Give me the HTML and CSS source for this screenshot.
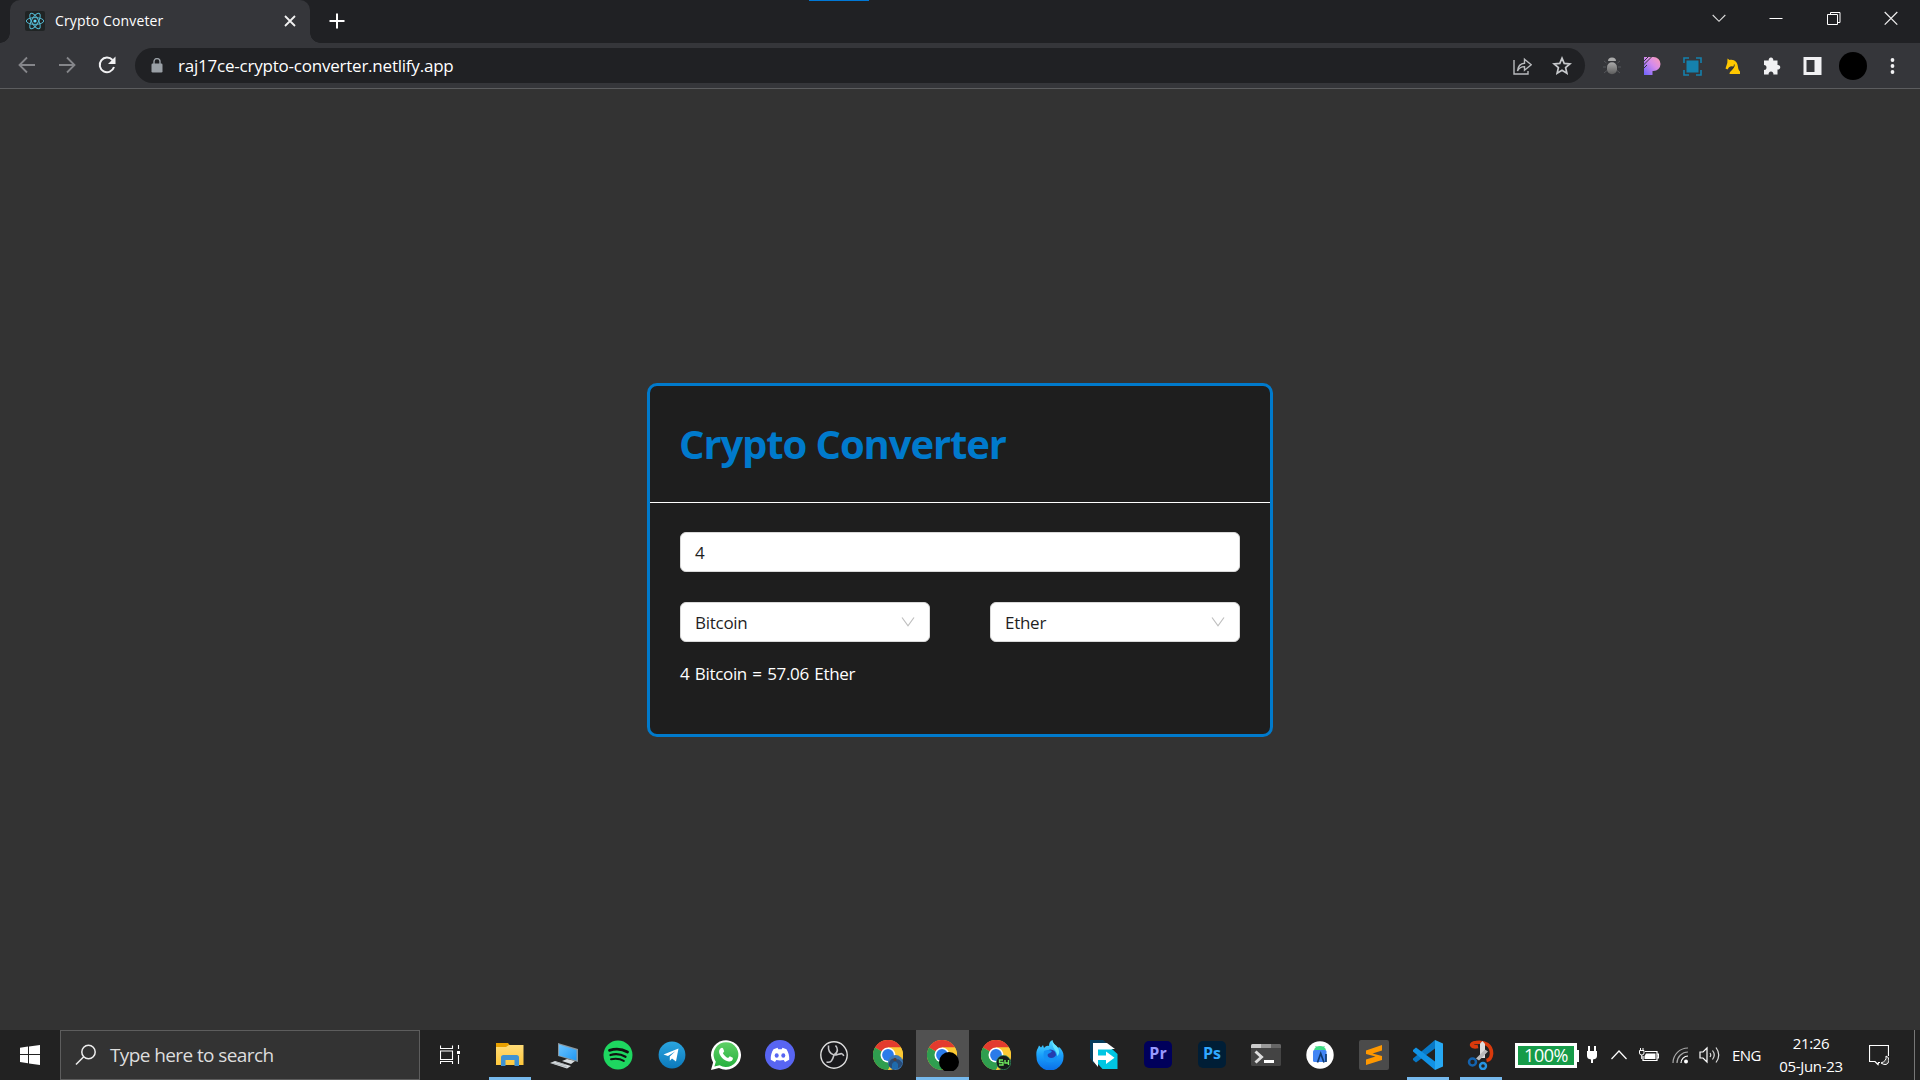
FILE: index.html
```html
<!DOCTYPE html>
<html lang="en">
<head>
<meta charset="utf-8">
<title>Crypto Conveter</title>
<link rel="stylesheet" href="styles.css">
</head>
<body>
<svg width="0" height="0" class="defs" aria-hidden="true">
  <defs>
    <linearGradient id="gBug" x1="0" y1="0" x2="0" y2="1"><stop offset="0" stop-color="#aaa"/><stop offset="1" stop-color="#5c5c5c"/></linearGradient>
    <linearGradient id="gP" x1="1" y1="0" x2="0" y2="1"><stop offset="0" stop-color="#ff9fb4"/><stop offset=".45" stop-color="#d58bea"/><stop offset="1" stop-color="#6b63ff"/></linearGradient>
    <linearGradient id="gFolder" x1="0" y1="0" x2="0" y2="1"><stop offset="0" stop-color="#ffdc78"/><stop offset="1" stop-color="#ffc83c"/></linearGradient>
    <linearGradient id="gTg" x1="0" y1="0" x2="0" y2="1"><stop offset="0" stop-color="#2aa5e0"/><stop offset="1" stop-color="#0c79bb"/></linearGradient>
    <linearGradient id="gWa" x1="0" y1="0" x2="0" y2="1"><stop offset="0" stop-color="#5fd066"/><stop offset="1" stop-color="#27b13e"/></linearGradient>
    <linearGradient id="gFx" x1="0" y1="0" x2="0" y2="1"><stop offset="0" stop-color="#53dcff"/><stop offset=".5" stop-color="#1aa0fb"/><stop offset="1" stop-color="#0a6fe8"/></linearGradient>
    <linearGradient id="gScreen" x1="0" y1="0" x2="1" y2="1"><stop offset="0" stop-color="#6cc4ff"/><stop offset="1" stop-color="#1f97f3"/></linearGradient>
    <symbol id="chrome" viewBox="0 0 30 30">
      <circle cx="15" cy="15" r="15" fill="#fcc934"/>
      <path d="M15 15 2 7.500A15 15 0 0 1 28 7.500H15z" fill="#e33b2e"/>
      <path d="M2 7.500A15 15 0 0 0 15 30L21.500 18.750 15 15z" fill="#2f9e4f"/>
      <path d="M15 7.500h13A15 15 0 0 1 15 30l6.500-11.250z" fill="#fcc934"/>
      <circle cx="15" cy="15" r="7.500" fill="#fff"/><circle cx="15" cy="15" r="5.900" fill="#2a7be9"/>
    </symbol>
  </defs>
</svg>

<header class="tabstrip">
  <div class="tab">
    <svg class="favicon" width="20" height="20" viewBox="0 0 20 20"><rect width="20" height="20" rx="2" fill="#202424"/><g fill="none" stroke="#53b7d0" stroke-width="1"><ellipse cx="10" cy="10" rx="8.700" ry="3.400"/><ellipse cx="10" cy="10" rx="8.700" ry="3.400" transform="rotate(60 10 10)"/><ellipse cx="10" cy="10" rx="8.700" ry="3.400" transform="rotate(120 10 10)"/></g><circle cx="10" cy="10" r="1.600" fill="#61dafb"/></svg>
    <span class="tab-title">Crypto Conveter</span>
    <svg class="tab-close" width="12" height="12" viewBox="0 0 12 12"><path d="M1 1l10 10M11 1L1 11" stroke="#f1f1f1" stroke-width="1.800"/></svg>
  </div>
  <svg class="new-tab" width="16" height="16" viewBox="0 0 16 16"><path d="M8 .5v15M.5 8h15" stroke="#fff" stroke-width="2"/></svg>
  <div class="share-bar"></div>
  <nav class="window-buttons">
    <svg width="14" height="14" viewBox="0 0 14 14"><path d="M.7 4 7 10.300 13.300 4" fill="none" stroke="#ddd" stroke-width="1.100"/></svg>
    <svg width="14" height="14" viewBox="0 0 14 14"><path d="M.5 7.500h13" stroke="#fff"/></svg>
    <svg width="14" height="14" viewBox="0 0 14 14"><path d="M.5 3.500h10v10H.5zM3.500 3.500V1.500h9.500V11.500h-2.500" fill="none" stroke="#fff"/></svg>
    <svg width="14" height="14" viewBox="0 0 14 14"><path d="M.7 1l12.600 12.600M13.300 1L.7 13.600" stroke="#eee" stroke-width="1.200"/></svg>
  </nav>
</header>

<div class="toolbar">
  <div class="nav-buttons">
    <svg width="18" height="18" viewBox="0 0 18 18"><path d="M17 9H2M9 1.500 1.500 9 9 16.500" fill="none" stroke="#85868a" stroke-width="1.800"/></svg>
    <svg width="18" height="18" viewBox="0 0 18 18"><path d="M1 9h15M9 1.500 16.500 9 9 16.500" fill="none" stroke="#85868a" stroke-width="1.800"/></svg>
    <svg width="18" height="18" viewBox="0 0 18 18"><path d="M14.500 4A7.300 7.300 0 1 0 16 11" fill="none" stroke="#f1f1f3" stroke-width="2"/><path d="M17.500.5v7.500H10z" fill="#f1f1f3"/></svg>
  </div>
  <div class="omnibox">
    <svg class="lock" width="12" height="15" viewBox="0 0 12 15"><rect x=".5" y="5.500" width="11" height="9" rx="1.200" fill="#9aa0a6"/><path d="M3 6V3.600a3 3 0 0 1 6 0V6" fill="none" stroke="#9aa0a6" stroke-width="1.400"/></svg>
    <span class="url">raj17ce-crypto-converter.netlify.app</span>
    <div class="omni-actions">
      <svg width="20" height="20" viewBox="0 0 20 20"><path d="M2 4v14h14v-3M5.500 15c.5-5 3-7.500 7-7.700V3.200l6.700 5.500-6.700 5.500v-3.600c-3.500 0-5.500 1.200-7 4.400z" fill="none" stroke="#b9bbbe" stroke-width="1.400"/></svg>
      <svg width="20" height="20" viewBox="0 0 20 20"><path d="m10 2.200 2.200 5.200 5.700.5-4.300 3.700 1.300 5.600-4.900-3-4.900 3 1.300-5.600L2.100 7.900l5.700-.5z" fill="none" stroke="#c7c9cc" stroke-width="1.700"/></svg>
    </div>
  </div>
  <div class="extensions">
    <svg width="20" height="20" viewBox="0 0 20 20"><path d="M2 5l2.500 2M18 5l-2.500 2M1 11h3M19 11h-3M2 17l3-2.500M18 17l-3-2.500" stroke="#55565a"/><path d="M6 5a4 3.500 0 0 1 8 0z" fill="#aaa"/><rect x="5" y="6.300" width="10" height="12" rx="5" fill="url(#gBug)"/></svg>
    <svg width="20" height="20" viewBox="0 0 20 20"><path d="M2 1h9.500a7 7 0 0 1 0 14H10.500v4H2z" fill="url(#gP)"/><path d="M1.500 5.500 6.500.5M1.500 9 10 .5M1.500 12.500 5 9" stroke="#35363a" stroke-width="1"/></svg>
    <svg width="20" height="20" viewBox="0 0 20 20"><rect x="4.500" y="4.500" width="12" height="12" fill="#1581ad"/><path d="M2 7V2h5M14 2h5v5M19 14v5h-5M7 19H2v-5" fill="none" stroke="#1581ad" stroke-width="1.600"/></svg>
    <svg width="20" height="20" viewBox="0 0 20 20"><path d="M5.500 2.500 7.500 4C12.500 3 15.500 6 16 11c.2 2.500 1 3.500 2 4.500V18H7.500c0-3 4-4 4.500-7.500L9 10.200 7 11.200 5.500 13.500 3.500 12.500 5.300 7z" fill="#ffc800"/><path d="M12.300 8.500c.2 2-1 3.500-2.500 4.800" fill="none" stroke="#33302a" stroke-width=".9"/></svg>
    <svg width="20" height="20" viewBox="0 0 20 20"><path d="M2 4.500h4.800a2.300 2.300 0 1 1 4.400 0H15.500V9a2.300 2.300 0 1 1 0 4.500V18.500H11.300a2.400 2.400 0 1 0-4.600 0H2v-4.500A2.500 2.500 0 1 0 2 9z" fill="#f1f1f3"/></svg>
    <svg width="20" height="20" viewBox="0 0 20 20"><path fill-rule="evenodd" d="M1.500 1h18v18h-18zM4.500 4v12h8V4z" fill="#f1f1f3"/></svg>
    <i class="avatar"></i>
    <svg width="20" height="20" viewBox="0 0 20 20"><circle cx="10.500" cy="4" r="1.900" fill="#f1f1f3"/><circle cx="10.500" cy="10" r="1.900" fill="#f1f1f3"/><circle cx="10.500" cy="16" r="1.900" fill="#f1f1f3"/></svg>
  </div>
</div>

<main class="page">
  <section class="card">
    <h1 class="card-title">Crypto Converter</h1>
    <div class="card-body">
      <div class="field"><span>4</span></div>
      <div class="selects">
        <div class="field"><span>Bitcoin</span><svg width="14" height="14" viewBox="0 0 14 14"><path d="M1 2.500 7 10.800 13 2.500" fill="none" stroke="#bfbfbf" stroke-width="1.200"/></svg></div>
        <div class="field"><span>Ether</span><svg width="14" height="14" viewBox="0 0 14 14"><path d="M1 2.500 7 10.800 13 2.500" fill="none" stroke="#bfbfbf" stroke-width="1.200"/></svg></div>
      </div>
      <p class="result">4 Bitcoin = 57.06 Ether</p>
    </div>
  </section>
</main>

<footer class="taskbar">
  <div class="start"><svg width="20" height="20" viewBox="0 0 20 20"><path d="M0 2.800 8 1.600V9H0zM9 1.400 20 0v9H9zM0 10h8v8.200L0 17zM9 10h11v10L9 18.500z" fill="#fff"/></svg></div>
  <div class="search">
    <svg width="22" height="22" viewBox="0 0 22 22"><circle cx="13.500" cy="8" r="6.700" fill="none" stroke="#eee" stroke-width="1.500"/><path d="M8.700 12.700 1 20.500" stroke="#eee" stroke-width="1.500"/></svg>
    <span>Type here to search</span>
  </div>
  <div class="taskview"><svg width="20" height="20" viewBox="0 0 20 20"><path d="M.5.500v3h12v-3M.5 6h12v8.500H.5zM.5 19v-2.500h12V19M18.500 0v4M18.500 10v9" fill="none" stroke="#fff" stroke-width="1.100"/><path d="M17 6h3v3h-3z" fill="#fff"/></svg></div>

  <div class="apps">
    <div class="app running"><svg width="30" height="30" viewBox="0 0 30 30"><path d="M1 3h12l2 2.500H14V9H1z" fill="#e8a000"/><path d="M1 7h10l3-2h14.500v20H1z" fill="url(#gFolder)"/><path d="M6 26V17.500Q6 15 8.500 15h13Q24 15 24 17.500V26h-4.500v-6h-9v6z" fill="#3f93d2"/></svg></div>
    <div class="app"><svg width="30" height="30" viewBox="0 0 30 30"><path d="M9 3 29 9V22L9 16z" fill="#8a979f"/><path d="M10 4.500 27.500 10V20.500L10 15.500z" fill="url(#gScreen)"/><path d="m13 21 5-2 8 2-4 3zM1 23l5-2 16 5-4 2.500z" fill="#d8dde0"/><path d="m3 23 15 4M7 22l10 3" stroke="#9da5a9" stroke-width=".7"/></svg></div>
    <div class="app"><svg width="30" height="30" viewBox="0 0 30 30"><circle cx="15" cy="15" r="14.500" fill="#1ed760"/><g fill="none" stroke="#111" stroke-linecap="round"><path d="M6.500 10.300c6-1.800 13-1.200 18 1.700" stroke-width="2.800"/><path d="M7.500 15c5-1.400 10.500-.8 15 1.700" stroke-width="2.300"/><path d="M8 19.300c4.500-1 9-.6 12.800 1.600" stroke-width="1.900"/></g></svg></div>
    <div class="app"><svg width="30" height="30" viewBox="0 0 30 30"><circle cx="15" cy="15" r="13.400" fill="url(#gTg)"/><path d="m6.500 14.500 15-6-2.500 13-4-3-2.200 2.200v-4.200l5.500-5.200-7.300 4.600z" fill="#fff"/></svg></div>
    <div class="app"><svg width="30" height="30" viewBox="0 0 30 30"><path d="M0 30 2.100 22.500A15 14.700 0 1 1 8 28z" fill="#fff"/><path d="M3.400 26.600 4.800 21.700A12.400 12.400 0 1 1 8.700 25.300z" fill="url(#gWa)"/><path d="M9.700 8.300c1-1 2-.7 2.400.2l1.100 2.700-1.300 2c1.300 2.300 2.800 3.700 5.200 4.800l1.700-1.700 3 1.500c.6 3-2.400 4-4 3.700-5-1-9.300-5.500-9.700-9.600-.1-1.400.6-2.700 1.600-3.600z" fill="#fff"/></svg></div>
    <div class="app"><svg width="30" height="30" viewBox="0 0 30 30"><circle cx="15" cy="15" r="15" fill="#5865f2"/><path d="m8.500 9.200 4-1.500.8 1.500h3.400l.8-1.500 4 1.500c2 3 3 7 2.700 10.600L20 22l-1.300-2q-3.700.8-7.400 0L10 22l-4.200-2.200C5.500 16 6.500 12 8.500 9.200z" fill="#fff"/><ellipse cx="11.700" cy="15.500" rx="2" ry="2.200" fill="#5865f2"/><ellipse cx="18.300" cy="15.500" rx="2" ry="2.200" fill="#5865f2"/></svg></div>
    <div class="app"><svg width="30" height="30" viewBox="0 0 30 30"><circle cx="15" cy="15" r="13.200" fill="#19191c" stroke="#dedede" stroke-width="1.400"/><path d="M9.500 5.500c-.5 5 2 8.500 5.500 9.500 5 0 8.500-3.700 9.700 1M15 15c-1.500 5.500-3 8-7.500 7M15 15c4.500-2.800 4-7 1.500-9.500" fill="none" stroke="#c5c5c8" stroke-width="1.600"/></svg></div>
    <div class="app"><svg width="30" height="30" viewBox="0 0 30 30"><use href="#chrome"/><circle cx="22.500" cy="22.500" r="7.500" fill="#3c78b4"/><path d="M15.500 25c1-5 4-8 7-5 3-2 5 1 7 3a7.500 7.500 0 0 1-14 2z" fill="#284c78"/><circle cx="22" cy="19.500" r="1.700" fill="#513f3c"/><path d="M19 29v-5q3-5 6 0v5z" fill="#1e6aac"/></svg></div>
    <div class="app active"><svg width="32" height="32" viewBox="0 0 32 32"><use href="#chrome" y="1" width="30" height="30"/><circle cx="22" cy="23" r="10" fill="#000"/></svg></div>
    <div class="app"><svg width="30" height="30" viewBox="0 0 30 30"><use href="#chrome"/><circle cx="22.500" cy="22.500" r="7.200" fill="#151c1b" stroke="#35a46d" stroke-width=".6"/><path d="M22 20h-3.500v2.500H22V25h-4M24 20v3h3.500M27.500 20v5" fill="none" stroke="#6ee95d" stroke-width="1.400"/></svg></div>
    <div class="app"><svg width="30" height="30" viewBox="0 0 30 30"><path d="M3 8 4 5.500l2 2 2-2.500 1 3c2-2 3-2.500 5-2 0-3 1-5 3.500-6 0 4 4 5 5.500 8l1-1c3 2.500 5 6 4.500 10a13.500 13.500 0 0 1-27 0C1 13 1.500 10 3 8z" fill="url(#gFx)"/><circle cx="15.500" cy="15" r="5.500" fill="#243cae"/><path d="M9 11c3-1.500 6-1 8 0-1 2-3 2-4 3s0 4 3 4 5-2 5.500-4c1.500 5-2 8.500-6.500 8.500C10 22.500 7.500 18 9 11z" fill="#1591f5"/><path d="M17.500 0c0 4 4 5 5.500 8 2 4 1 7-1 8 1-5-6-7-4.500-16z" fill="#63e5ff"/></svg></div>
    <div class="app"><svg width="30" height="30" viewBox="0 0 30 30"><path d="M1 0h13l4 3.500H5V24l-4-6z" fill="#053d5d"/><path d="M4 3h14l8 6H9v18l-5-6z" fill="#fff"/><path d="M9 9h14l5.500 5v15H13.500L9 24z" fill="#00c6e2"/><path d="M9 7h11l3 2.500H9z" fill="#fff"/><path d="M8.500 15.500H17V11.500l8.500 6.300L17 24v-4H8.500z" fill="#fff"/></svg></div>
    <div class="app"><div class="adobe premiere">Pr</div></div>
    <div class="app"><div class="adobe photoshop">Ps</div></div>
    <div class="app"><svg width="30" height="30" viewBox="0 0 30 30"><rect y="4" width="30" height="22" rx="1.500" fill="#444"/><path d="M0 8V5.500Q0 4 1.500 4H10v4z" fill="#ccc"/><path d="M10 4h10v4H10z" fill="#999"/><path d="M20 4h8.500Q30 4 30 5.500V8H20z" fill="#666"/><path d="m4.500 11.500 6 5.500-6 5.500" fill="none" stroke="#ddd" stroke-width="3"/><path d="M13 20h10v3H13z" fill="#fff"/></svg></div>
    <div class="app"><svg width="30" height="30" viewBox="0 0 30 30"><circle cx="15" cy="15" r="13.700" fill="#fff"/><path d="M9 10.500a6 4.500 0 0 1 12 0z" fill="#3ddc84"/><path d="m10.500 6 2 2M19.500 6l-2 2" stroke="#3ddc84"/><rect x="8" y="10" width="13.500" height="12" rx="1.500" fill="#4285f4"/><path d="m12.500 22.500 3.200-9 3.300 9M21 14v8" fill="none" stroke="#103b70" stroke-width="1.700"/></svg></div>
    <div class="app"><svg width="30" height="30" viewBox="0 0 30 30"><rect width="30" height="30" rx="2" fill="#4b4b4b"/><path d="M7 10.500 23 5v5.500L13.500 13.500 23 16v4L7 25v-5.500L16.500 16.500 7 14z" fill="#ff9800"/></svg></div>
    <div class="app running"><svg width="30" height="30" viewBox="0 0 30 30"><path d="M22 0v8.500L3 22.500 0 20V18.500z" fill="#0878c6"/><path d="M22 30v-8.500L3 7.500 0 10v1.500z" fill="#1192e5"/><path d="M22 0l8 3.500v23L22 30z" fill="#27a9f4"/></svg></div>
    <div class="app running"><svg width="30" height="30" viewBox="0 0 30 30"><path d="M11 6.500C4 8 2 3.500 9 2.500c9-1.500 16 3 15.500 11.500-.3 4-2.500 6-5 6.500" fill="none" stroke="#d93a0c" stroke-width="3.600"/><path d="M13 3.500 15.500 1 18 4v14h-5z" fill="#ddd"/><path d="m9 18.500 9-9 3 2-9 9z" fill="#bbb"/><circle cx="5.500" cy="22" r="3.500" fill="none" stroke="#1463ae" stroke-width="2.500"/><circle cx="16" cy="26" r="3" fill="none" stroke="#2795e3" stroke-width="2.400"/></svg></div>
  </div>

  <div class="tray">
    <div class="battery-meter"><span>100%</span></div>
    <svg class="plug" width="12" height="20" viewBox="0 0 12 20"><path d="M2 1h2v5h4V1h2v5h1v5q0 3-4 3.500V18H5v-3.500Q1 14 1 11V6h1z" fill="#fff"/></svg>
    <svg class="chevron" width="16" height="10" viewBox="0 0 16 10"><path d="m.5 9 7.500-8 7.500 8" fill="none" stroke="#fff" stroke-width="1.200"/></svg>
    <svg class="battery" width="20" height="14" viewBox="0 0 20 14"><path d="M6 3.500h12v9H4V8M18 6h1.500v4H18" fill="none" stroke="#fff" stroke-width="1.200"/><path d="M7 5.500h9.500v5.500H5.500V8z" fill="#fff"/><path d="M.5 2.500h4.500v2.500q0 2-2.200 2Q.5 7 .5 5zM1.500 0v2M4 0v2M2.700 7v4" fill="none" stroke="#fff"/></svg>
    <svg class="wifi" width="17" height="17" viewBox="0 0 17 17"><g fill="none" stroke="#aaa" stroke-width="1.200"><path d="M1 16A15 15 0 0 1 16 1"/><path d="M5 16A11 11 0 0 1 16 5"/><path d="M9 16a7 7 0 0 1 7-7" stroke="#fff"/></g><circle cx="14" cy="14.500" r="2" fill="#fff"/></svg>
    <svg class="speaker" width="21" height="18" viewBox="0 0 21 18"><path d="M1 6h3l4-4v14l-4-4H1z" fill="none" stroke="#fff" stroke-width="1.200"/><path d="M11 7q1.500 2 0 4M13.500 4.500q3.500 4.500 0 9M17 1.500q5.500 7.500 0 15" fill="none" stroke="#ddd" stroke-width="1.200"/></svg>
    <span class="lang">ENG</span>
    <div class="clock"><span class="time">21:26</span><span class="date">05-Jun-23</span></div>
    <svg class="notice" width="20" height="21" viewBox="0 0 20 21"><path d="M11 17.500H9.500L9 19.500 6 16.500H.5V.5h19V11" fill="none" stroke="#fff" stroke-width="1.200"/><path d="M17 11q1 5-5 7 6 4 8-2 .5-4-3-5z" fill="#444" stroke="#fff"/></svg>
    <i class="peek"></i>
  </div>
</footer>
</body>
</html>
```
FILE: styles.css
```css
* { box-sizing: border-box; }
body {
  margin: 0;
  width: 1920px;
  height: 1080px;
  overflow: hidden;
  display: flex;
  flex-direction: column;
  background: #333;
  color: #fff;
  font-family: "Open Sans", "Noto Sans", sans-serif;
}
svg { display: block; flex: none; }
span { white-space: nowrap; }
.defs { position: absolute; }

/* Tab strip */
.tabstrip { position: relative; flex: none; display: flex; align-items: flex-start; height: 43px; padding-left: 10px; background: #202124; }
.tab { position: relative; display: flex; align-items: center; width: 300px; height: 43px; padding: 0 14px 1px 15px; border-radius: 10px 10px 0 0; background: #35363a; }
.tab::before, .tab::after { content: ""; position: absolute; bottom: 0; width: 10px; height: 10px; }
.tab::before { left: -10px; background: radial-gradient(circle at 0 0, transparent 9.500px, #35363a 10px); }
.tab::after { right: -10px; background: radial-gradient(circle at 100% 0, transparent 9.500px, #35363a 10px); }
.tab-title { flex: 1; margin: -2px 0 0 10px; font-size: 14px; letter-spacing: .13px; }
.new-tab { margin: 13px 0 0 19px; }
.share-bar { position: absolute; left: 809px; top: 0; width: 60px; height: 1px; background: #0078d7; }
.window-buttons { display: flex; align-items: center; justify-content: space-between; margin-left: auto; width: 230px; height: 36px; padding: 0 22px; }

/* Toolbar */
.toolbar { flex: none; display: flex; align-items: center; height: 46px; padding: 0 8px 0 7px; border-bottom: 1px solid #5c5d5f; background: #35363a; }
.nav-buttons { display: grid; grid-template-columns: repeat(3, 40px); justify-items: center; margin-bottom: 1px; }
.omnibox { flex: none; display: flex; align-items: center; width: 1450px; height: 35px; margin-left: 8px; padding: 0 3px 0 16px; border-radius: 18px; background: #202124; }
.url { flex: 1; margin-left: 15px; font-size: 17px; letter-spacing: -.22px; }
.omni-actions { display: grid; grid-template-columns: repeat(2, 40px); justify-items: center; }
.extensions { display: grid; grid-template-columns: repeat(8, 40px); justify-items: center; align-items: center; margin-left: 7px; }
.avatar { width: 28px; height: 28px; margin-left: 2px; border-radius: 50%; background: #000; }

/* Converter */
.page { flex: 1; display: flex; flex-direction: column; align-items: center; padding-top: 294px; }
.card { width: 626px; height: 354px; border: 3px solid #007acc; border-radius: 10px; background: #1e1e1e; }
.card-title { height: 117px; margin: 0; padding: 0 29px; border-bottom: 1px solid #fff; color: #007acc; font-size: 40px; line-height: 115px; letter-spacing: -1.100px; white-space: nowrap; }
.card-body { display: flex; flex-direction: column; gap: 30px; padding: 29px 30px 0; }
.field { display: flex; align-items: center; justify-content: space-between; height: 40px; padding: 0 14px; border: 1px solid #d9d9d9; border-radius: 6px; background: #fff; color: #1f1f1f; font-size: 17px; letter-spacing: -.27px; }
.selects { display: grid; grid-template-columns: 250px 250px; gap: 60px; }
.result { margin: -12px 0 0; font-size: 17px; line-height: 28px; letter-spacing: -.32px; word-spacing: 1.300px; }

/* Taskbar */
.taskbar { flex: none; display: flex; height: 50px; background: #222; }
.start { display: grid; place-items: center; width: 60px; }
.search { display: flex; align-items: center; gap: 13px; width: 360px; padding-left: 14px; border: 1px solid #5d5d5d; background: #333; color: #ddd; font-size: 19px; letter-spacing: -.6px; }
.taskview { display: grid; place-items: center; width: 60px; padding-bottom: 1px; }
.apps { display: grid; grid-template-columns: repeat(19, 54px); margin-left: 3px; }
.app { position: relative; display: grid; place-items: center; }
.active { margin-left: 1px; background: #515151; }
.running::after, .active::after { content: ""; position: absolute; bottom: 0; left: 6px; width: 42px; height: 3px; background: #76b9ed; }
.app.running:last-child::after { left: 5px; }
.active::after { left: 0; width: 100%; }
.adobe { width: 28px; height: 27px; margin-bottom: 2px; border-radius: 5px; font: 700 16px/25px "Open Sans", sans-serif; text-align: center; }
.premiere { background: #00005b; color: #99f; }
.photoshop { background: #001e36; color: #31a8ff; }
.tray { display: flex; align-items: center; margin-left: 6px; }
.battery-meter { position: relative; width: 62px; height: 25px; border: 3px solid #fff; background: #169b48; font-size: 18px; line-height: 18px; text-align: center; letter-spacing: -.5px; }
.battery-meter::after { content: ""; position: absolute; right: -5px; top: 4px; width: 3px; height: 12px; background: #fff; }
.plug { margin-left: 9px; }
.chevron { margin-left: 13px; }
.battery { margin-left: 12px; }
.wifi { margin-left: 13px; }
.speaker { margin-left: 10px; }
.lang { width: 28px; margin-left: 12px; font-size: 15px; letter-spacing: -.6px; }
.clock { display: flex; flex-direction: column; align-items: center; width: 66px; margin-left: 18px; font-size: 15px; line-height: 23px; letter-spacing: -.3px; }
.notice { margin-left: 25px; }
.peek { width: 1px; height: 50px; margin-left: 25px; background: #777; }
```
